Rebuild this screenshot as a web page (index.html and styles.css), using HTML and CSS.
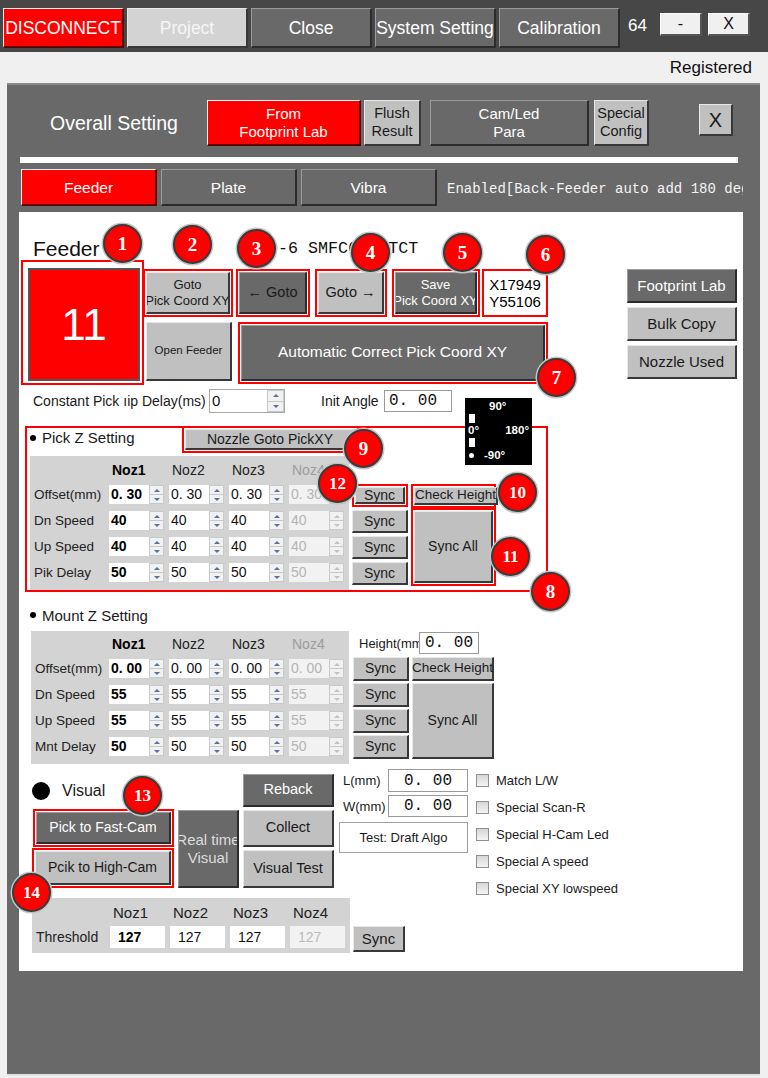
FILE: index.html
```html
<!DOCTYPE html>
<html>
<head>
<meta charset="utf-8">
<title>Overall Setting</title>
<link rel="stylesheet" href="styles.css">
</head>
<body>
<div class="topbar">
  <div class="tb btn rd">DISCONNECT</div>
  <div class="tb btn pj">Project</div>
  <div class="tb btn dk">Close</div>
  <div class="tb btn dk">System Setting</div>
  <div class="tb btn dk">Calibration</div>
  <span class="num">64</span>
  <div class="wbtn btn">-</div>
  <div class="wbtn btn">X</div>
</div>
<div class="reg">Registered</div>

<div class="panel">
  <div class="head">
    <span class="otitle">Overall Setting</span>
    <div class="btn rd h-from">From<br>Footprint Lab</div>
    <div class="btn lt h-flush">Flush<br>Result</div>
    <div class="btn dk h-cam">Cam/Led<br>Para</div>
    <div class="btn lt h-spec">Special<br>Config</div>
    <div class="btn lt h-x">X</div>
  </div>
  <div class="sep"></div>
  <div class="tabs">
    <div class="btn rd tab">Feeder</div>
    <div class="btn dk tab">Plate</div>
    <div class="btn dk tab">Vibra</div>
    <div class="enabled">Enabled[Back-Feeder auto add 180 degree]</div>
  </div>

  <div class="content">
    <div class="ftitle"><span class="fname">Feeder</span><span class="fid">10-6 SMFC0603TCT</span></div>

    <div class="fblock">
      <div class="bigwrap"><div class="big">11</div></div>
      <div class="mid">
        <div class="row1">
          <div class="hl w90"><div class="btn lt f13">Goto<br>Pick Coord XY</div></div>
          <div class="hl w74 ml3"><div class="btn dk dtxt f145">← Goto</div></div>
          <div class="hl w72 ml5"><div class="btn lt f145">Goto →</div></div>
          <div class="hl w88 ml5"><div class="btn dk f13">Save<br>Pick Coord XY</div></div>
          <div class="hl w66 ml2"><div class="xy">X17949<br>Y55106</div></div>
        </div>
        <div class="row2">
          <div class="btn lt openf">Open Feeder</div>
          <div class="hl autoc"><div class="btn dk">Automatic Correct Pick Coord XY</div></div>
        </div>
      </div>
      <div class="rcol">
        <div class="btn dk">Footprint Lab</div>
        <div class="btn lt">Bulk Copy</div>
        <div class="btn lt">Nozzle Used</div>
      </div>
    </div>

    <div class="crow">
      <span class="clabel">Constant Pick ıip Delay(ms)</span>
      <div class="sp cspin"><span class="v">0</span><span class="arr"><i></i><i></i></span></div>
      <span class="ilabel">Init Angle</span>
      <div class="tbox ainp">0. 00</div>
    </div>

    <div class="group">
      <div class="ghead">
        <span class="glabel"><b class="dot"></b>Pick Z Setting</span>
        <div class="hl ngoto"><div class="btn lt">Nozzle Goto PickXY</div></div>
      </div>
      <div class="gbody">
        <div class="tbl pick">
          <span></span><span class="hd b">Noz1</span><span class="hd">Noz2</span><span class="hd">Noz3</span><span class="hd dis">Noz4</span>
          <span class="lb">Offset(mm)</span>
          <div class="sp b"><span class="v">0. 30</span><span class="arr"><i></i><i></i></span></div>
          <div class="sp"><span class="v">0. 30</span><span class="arr"><i></i><i></i></span></div>
          <div class="sp"><span class="v">0. 30</span><span class="arr"><i></i><i></i></span></div>
          <div class="sp off"><span class="v">0. 30</span><span class="arr"><i></i><i></i></span></div>
          <span class="lb">Dn Speed</span>
          <div class="sp b"><span class="v">40</span><span class="arr"><i></i><i></i></span></div>
          <div class="sp"><span class="v">40</span><span class="arr"><i></i><i></i></span></div>
          <div class="sp"><span class="v">40</span><span class="arr"><i></i><i></i></span></div>
          <div class="sp off"><span class="v">40</span><span class="arr"><i></i><i></i></span></div>
          <span class="lb">Up Speed</span>
          <div class="sp b"><span class="v">40</span><span class="arr"><i></i><i></i></span></div>
          <div class="sp"><span class="v">40</span><span class="arr"><i></i><i></i></span></div>
          <div class="sp"><span class="v">40</span><span class="arr"><i></i><i></i></span></div>
          <div class="sp off"><span class="v">40</span><span class="arr"><i></i><i></i></span></div>
          <span class="lb">Pik Delay</span>
          <div class="sp b"><span class="v">50</span><span class="arr"><i></i><i></i></span></div>
          <div class="sp"><span class="v">50</span><span class="arr"><i></i><i></i></span></div>
          <div class="sp"><span class="v">50</span><span class="arr"><i></i><i></i></span></div>
          <div class="sp off"><span class="v">50</span><span class="arr"><i></i><i></i></span></div>
        </div>
        <div class="synccol">
          <div class="hl"><div class="btn lt">Sync</div></div>
          <div class="btn lt">Sync</div>
          <div class="btn lt">Sync</div>
          <div class="btn lt">Sync</div>
        </div>
        <div class="chkcol">
          <div class="hl ch"><div class="btn lt vis-ov">Check Height</div></div>
          <div class="hl sa"><div class="btn lt">Sync All</div></div>
        </div>
      </div>
    </div>

    <div class="mlabel"><b class="dot"></b>Mount Z Setting</div>
    <div class="mrow">
      <div class="tbl mount">
        <span></span><span class="hd b">Noz1</span><span class="hd">Noz2</span><span class="hd">Noz3</span><span class="hd dis">Noz4</span>
        <span class="lb">Offset(mm)</span>
        <div class="sp b"><span class="v">0. 00</span><span class="arr"><i></i><i></i></span></div>
        <div class="sp"><span class="v">0. 00</span><span class="arr"><i></i><i></i></span></div>
        <div class="sp"><span class="v">0. 00</span><span class="arr"><i></i><i></i></span></div>
        <div class="sp off"><span class="v">0. 00</span><span class="arr"><i></i><i></i></span></div>
        <span class="lb">Dn Speed</span>
        <div class="sp b"><span class="v">55</span><span class="arr"><i></i><i></i></span></div>
        <div class="sp"><span class="v">55</span><span class="arr"><i></i><i></i></span></div>
        <div class="sp"><span class="v">55</span><span class="arr"><i></i><i></i></span></div>
        <div class="sp off"><span class="v">55</span><span class="arr"><i></i><i></i></span></div>
        <span class="lb">Up Speed</span>
        <div class="sp b"><span class="v">55</span><span class="arr"><i></i><i></i></span></div>
        <div class="sp"><span class="v">55</span><span class="arr"><i></i><i></i></span></div>
        <div class="sp"><span class="v">55</span><span class="arr"><i></i><i></i></span></div>
        <div class="sp off"><span class="v">55</span><span class="arr"><i></i><i></i></span></div>
        <span class="lb">Mnt Delay</span>
        <div class="sp b"><span class="v">50</span><span class="arr"><i></i><i></i></span></div>
        <div class="sp"><span class="v">50</span><span class="arr"><i></i><i></i></span></div>
        <div class="sp"><span class="v">50</span><span class="arr"><i></i><i></i></span></div>
        <div class="sp off"><span class="v">50</span><span class="arr"><i></i><i></i></span></div>
      </div>
      <div class="mright">
        <div class="hrow"><span class="hlabel">Height(mm)</span><div class="tbox hin">0. 00</div></div>
        <div class="mbtns">
          <div class="msync">
            <div class="btn lt">Sync</div>
            <div class="btn lt">Sync</div>
            <div class="btn lt">Sync</div>
            <div class="btn lt">Sync</div>
          </div>
          <div class="mchk">
            <div class="btn lt mch vis-ov">Check Height</div>
            <div class="btn lt msa">Sync All</div>
          </div>
        </div>
      </div>
    </div>

    <div class="visual">
      <div class="vA">
        <div class="vhead"><b class="bigdot"></b><span>Visual</span></div>
        <div class="hl fast"><div class="btn dk">Pick to Fast-Cam</div></div>
        <div class="hl high"><div class="btn lt">Pcik to High-Cam</div></div>
      </div>
      <div class="btn dk realt">Real time<br>Visual</div>
      <div class="vC">
        <div class="btn dk rb">Reback</div>
        <div class="btn lt co">Collect</div>
        <div class="btn lt vt">Visual Test</div>
      </div>
      <div class="vD">
        <div class="lrow"><span>L(mm)</span><div class="tbox">0. 00</div></div>
        <div class="lrow wrow"><span>W(mm)</span><div class="tbox">0. 00</div></div>
        <div class="tda">Test: Draft Algo</div>
      </div>
      <div class="vE">
        <div class="cb"><i></i>Match L/W</div>
        <div class="cb"><i></i>Special Scan-R</div>
        <div class="cb"><i></i>Special H-Cam Led</div>
        <div class="cb"><i></i>Special A speed</div>
        <div class="cb"><i></i>Special XY lowspeed</div>
      </div>
    </div>

    <div class="thr">
      <div class="tbl ttbl">
        <span></span><span class="hd">Noz1</span><span class="hd">Noz2</span><span class="hd">Noz3</span><span class="hd">Noz4</span>
        <span class="lb">Threshold</span>
        <div class="tin b">127</div>
        <div class="tin">127</div>
        <div class="tin">127</div>
        <div class="tin off">127</div>
      </div>
      <div class="btn lt tsync">Sync</div>
    </div>
  </div>
</div>

<div class="angle">
  <div class="a90">90°</div>
  <div class="abar"></div>
  <div class="amid"><span>0°</span><span>180°</span></div>
  <div class="abar"></div>
  <div class="abot"><b></b><span>-90°</span></div>
</div>

<div class="badge b1">1</div>
<div class="badge b2">2</div>
<div class="badge b3">3</div>
<div class="badge b4">4</div>
<div class="badge b5">5</div>
<div class="badge b6">6</div>
<div class="badge b7">7</div>
<div class="badge b8">8</div>
<div class="badge b9">9</div>
<div class="badge two b10">10</div>
<div class="badge two b11">11</div>
<div class="badge two b12">12</div>
<div class="badge two b13">13</div>
<div class="badge two b14">14</div>
</body>
</html>
```

FILE: styles.css
```css
* { box-sizing: border-box; margin: 0; padding: 0; }
html, body { width: 768px; height: 1078px; overflow: hidden; }
body {
  background: #f0f0f0;
  font-family: "Liberation Sans", Arial, sans-serif;
  color: #1a1a1a;
  position: relative;
}

/* generic 3D buttons */
.btn {
  display: flex; align-items: center; justify-content: center; text-align: center;
  border-style: solid; border-width: 1px 2px 2px 1px;
  border-color: #e8e8e8 #383838 #383838 #e8e8e8;
  line-height: 1.2; white-space: nowrap; overflow: hidden;
  font-size: 14px;
}
.lt { background: #c0c0c0; color: #1a1a1a; }
.dk { background: #696969; color: #fff; border-color: #9c9c9c #2c2c2c #2c2c2c #9c9c9c; }
.rd { background: #ff0000; color: #fff; border-color: #f4f4f4 #5a0000 #5a0000 #f4f4f4; }
.pj { background: #d3d3d3; color: #f6f6f6; }
.btn.dtxt { color: #1a1a1a; }
.vis-ov { overflow: visible; }

/* top bar */
.topbar { height: 52px; background: #474747; display: flex; align-items: flex-start; padding: 8px 0 0 3px; }
.tb { width: 121px; height: 40px; margin-right: 3px; font-size: 17.5px; padding-top: 2px; }
.num { color: #fff; font-size: 17px; line-height: 20px; margin: 8px 0 0 5px; width: 32px; }
.wbtn { width: 42px; height: 23px; margin: 5px 6px 0 0; background: #f0f0f0; color: #111; font-size: 16px; border-color: #fff #555 #555 #fff; }
.reg { height: 28px; line-height: 28px; padding-top: 2px; text-align: right; padding-right: 16px; font-size: 17px; color: #111; }

/* panel */
.panel { margin: 3px 8px 0 7px; height: 993px; background: #696969; border-bottom: 2px solid #e2e2e2; border-top: 2px solid #8a8a8a; }
.head { display: flex; align-items: flex-start; padding-top: 15px; height: 61px; }
.otitle { width: 200px; padding-left: 43px; font-size: 19.5px; color: #fff; line-height: 46px; }
.h-from { width: 154px; height: 46px; font-size: 15px; }
.h-flush { width: 57px; height: 46px; margin-left: 3px; font-size: 14.5px; }
.h-cam { width: 159px; height: 46px; margin-left: 9px; font-size: 15px; }
.h-spec { width: 55px; height: 46px; margin-left: 5px; font-size: 14.5px; }
.h-x { width: 34px; height: 32px; margin: 4px 0 0 50px; font-size: 20px; }
.sep { margin: 11px 0 0 13px; width: 718px; height: 6px; background: #fff; }
.tabs { display: flex; align-items: center; margin-top: 6px; padding-left: 14px; height: 37px; }
.tab { width: 136px; height: 37px; margin-right: 4px; font-size: 15.5px; padding-top: 2px; }
.enabled { margin-left: 6px; width: 296px; overflow: hidden; white-space: nowrap; color: #f4f4f4; font-family: "Liberation Mono", monospace; font-size: 14px; padding-top: 2px; }

/* white content */
.content { margin: 6px 0 0 12px; width: 724px; height: 759px; background: #fff; }

.ftitle { display: grid; grid-template-columns: 225px auto; padding: 26px 0 0 14px; height: 48px; align-items: center; }
.fname { font-size: 21px; line-height: 22px; color: #111; }
.fid { font-family: "Liberation Mono", monospace; font-size: 16.7px; line-height: 22px; color: #111; }

.fblock { display: flex; align-items: flex-start; height: 125px; }
.bigwrap { margin-left: 2px; width: 123px; height: 125px; border: 2px solid #f00; padding: 6px 2px 2px 5px; }
.big { width: 100%; height: 100%; background: #f00; border: 2px solid #555; color: #fff; font-size: 44px; display: flex; align-items: center; justify-content: center; }
.mid { margin-left: -1px; }
.row1 { display: flex; margin-top: 9px; height: 48px; }
.hl { border: 2px solid #f00; padding: 1px; display: flex; }
.hl > * { flex: 1; }
.w90 { width: 90px; } .w74 { width: 74px; } .w72 { width: 72px; } .w88 { width: 88px; } .w66 { width: 66px; }
.ml2 { margin-left: 2px; } .ml3 { margin-left: 3px; } .ml5 { margin-left: 5px; }
.f13 { font-size: 13px; line-height: 1.2; }
.f145 { font-size: 14.5px; }
.xy { background: #fff; font-size: 15px; display: flex; align-items: center; justify-content: center; line-height: 1.15; color: #000; text-align: left; }
.row2 { display: flex; margin-top: 5px; align-items: flex-start; }
.openf { margin-left: 3px; width: 86px; height: 59px; font-size: 11.5px; }
.autoc { margin-left: 6px; width: 310px; height: 62px; }
.autoc .btn { font-size: 15.5px; }
.rcol { margin: 9px 6px 0 auto; width: 110px; display: flex; flex-direction: column; gap: 4px; }
.rcol .btn { height: 34px; font-size: 15px; }

/* constant row */
.crow { display: flex; align-items: center; margin-top: 4px; height: 24px; }
.clabel { width: 190px; padding-left: 14px; font-size: 14px; white-space: nowrap; }
.ilabel { margin-left: 36px; width: 63px; font-size: 14px; }
.tbox { border: 1px solid #9a9a9a; background: #fff; font-family: "Liberation Mono", monospace; font-size: 16px; padding-left: 4px; display: flex; align-items: center; color: #111; }
.ainp { width: 68px; height: 22px; }

/* spinners */
.sp { display: flex; background: #fff; height: 19px; }
.sp .v { flex: 1; padding-left: 2px; font-size: 14px; line-height: 19px; white-space: nowrap; overflow: hidden; color: #111; }
.sp.b .v { font-weight: bold; color: #000; }
.sp.off { background: #f2f2f2; }
.sp.off .v { color: #b4b4b4; }
.arr { width: 15px; display: flex; flex-direction: column; border: 1px solid #c9c9c9; background: #f1f1f1; }
.arr i { flex: 1; display: flex; align-items: center; justify-content: center; }
.arr i:first-child { border-bottom: 1px solid #c9c9c9; }
.arr i::after { content: ""; width: 0; height: 0; border-left: 3px solid transparent; border-right: 3px solid transparent; }
.arr i:first-child::after { border-bottom: 3px solid #5b6f98; }
.arr i:last-child::after { border-top: 3px solid #5b6f98; }
.sp.off .arr i:first-child::after { border-bottom-color: #c2c2c2; }
.sp.off .arr i:last-child::after { border-top-color: #c2c2c2; }
.cspin { width: 76px; height: 24px; border: 1px solid #a8a8a8; }
.cspin .v { line-height: 22px; font-size: 15px; }
.cspin .arr { width: 17px; }

/* pick z group */
.group { margin: 13px 0 0 6px; width: 523px; height: 166px; border: 2px solid #f00; }
.ghead { display: flex; height: 26px; }
.glabel { width: 155px; padding: 1px 0 0 3px; font-size: 15px; line-height: 18px; display: flex; align-items: center; align-self: flex-start; }
.dot { width: 6px; height: 6px; border-radius: 50%; background: #000; margin-right: 6px; display: inline-block; }
.ngoto { margin-top: -2px; width: 177px; height: 27px; }
.gbody { display: flex; align-items: flex-start; margin-top: 2px; }

.tbl { background: #d3d3d3; display: grid; column-gap: 5px; font-size: 13.5px; }
.tbl .hd { display: flex; align-items: flex-end; padding-left: 3px; font-size: 14px; line-height: 16px; color: #222; }
.tbl .hd.b { font-weight: bold; color: #000; }
.tbl .hd.dis { color: #9c9c9c; }
.tbl .lb { display: flex; align-items: center; padding-left: 4px; white-space: nowrap; color: #222; }
.pick { margin-left: 3px; width: 319px; height: 134px; grid-template-columns: 74px repeat(4, 55px); grid-template-rows: 22px repeat(4, 19px); row-gap: 7px; }

.synccol { margin: 28px 0 0 3px; width: 56px; display: flex; flex-direction: column; gap: 3px; }
.synccol > * { height: 23px; }
.synccol .btn { font-size: 14px; }
.chkcol { margin: 28px 0 0 3px; width: 85px; display: flex; flex-direction: column; }
.ch { height: 24px; }
.ch .btn { font-size: 13.5px; }
.sa { height: 78px; }

/* mount */
.mlabel { margin: 7px 0 0 11px; height: 32px; display: flex; align-items: center; font-size: 15px; }
.mrow { display: flex; align-items: flex-start; height: 133px; }
.mount { margin-left: 12px; width: 318px; height: 133px; grid-template-columns: 73px repeat(4, 55px); grid-template-rows: 21px repeat(4, 19px); row-gap: 7px; }
.mright { margin-left: 4px; }
.hrow { display: flex; margin-top: 1px; height: 22px; align-items: center; }
.hlabel { width: 66px; padding-left: 6px; overflow: hidden; white-space: nowrap; font-size: 13px; }
.hin { width: 60px; height: 22px; justify-content: center; padding-left: 0; }
.mbtns { display: flex; margin-top: 3px; }
.msync { width: 56px; display: flex; flex-direction: column; gap: 2px; }
.msync .btn { height: 24px; }
.mchk { margin-left: 3px; width: 82px; display: flex; flex-direction: column; gap: 2px; }
.mch { height: 24px; font-size: 13.5px; }
.msa { height: 76px; }

/* visual */
.visual { display: flex; align-items: flex-start; height: 119px; margin-top: 5px; }
.vA { margin-left: 13px; width: 142px; }
.vhead { margin-top: 13px; height: 18px; display: flex; align-items: center; }
.bigdot { width: 18px; height: 18px; border-radius: 50%; background: #000; display: block; }
.vhead span { margin-left: 12px; font-size: 16px; }
.fast { margin: 9px 0 0 1px; width: 141px; height: 38px; }
.high { margin-top: 1px; width: 142px; height: 40px; }
.realt { margin: 41px 0 0 4px; width: 61px; height: 78px; color: #dcdcdc; font-size: 15px; }
.vC { margin: 5px 0 0 4px; width: 91px; display: flex; flex-direction: column; gap: 3px; }
.vC .btn { font-size: 14.5px; }
.rb { height: 33px; } .co { height: 37px; } .vt { height: 38px; }
.vD { margin-left: 5px; width: 129px; }
.lrow { display: flex; align-items: center; height: 23px; }
.lrow span { width: 49px; padding-left: 4px; font-size: 13px; white-space: nowrap; }
.lrow .tbox { width: 80px; height: 100%; justify-content: center; padding-left: 0; }
.wrow { margin-top: 3px; height: 22px; }
.tda { margin-top: 5px; height: 31px; border: 1px solid #a0a0a0; background: #fff; font-size: 13px; display: flex; align-items: center; justify-content: center; }
.vE { margin: -2px 0 0 8px; }
.cb { height: 27px; display: flex; align-items: center; font-size: 13px; white-space: nowrap; color: #1a1a1a; }
.cb i { width: 13px; height: 13px; border: 1px solid #8f8f8f; background: linear-gradient(#d6d6d6, #f4f4f4); margin-right: 7px; display: block; }

/* threshold */
.thr { display: flex; align-items: flex-start; margin-top: 10px; }
.ttbl { margin-left: 13px; width: 318px; height: 55px; grid-template-columns: 73px repeat(4, 55px); grid-template-rows: 23px 22px; row-gap: 5px; font-size: 14px; }
.ttbl .hd { font-size: 15px; }
.tin { background: #fff; font-size: 14px; display: flex; align-items: center; padding-left: 8px; color: #111; }
.tin.b { font-weight: bold; color: #000; }
.tin.off { background: #f2f2f2; color: #bcbcbc; }
.tsync { margin: 28px 0 0 3px; width: 52px; height: 26px; font-size: 15px; }

/* angle indicator overlay */
.angle { position: absolute; left: 465px; top: 398px; width: 67px; height: 67px; background: #000; color: #fff; font-size: 11.5px; font-weight: bold; padding: 2px 3px 0 3px; line-height: 13px; }
.a90 { padding-left: 21px; height: 13px; }
.abar { width: 6px; height: 9px; background: #fff; margin: 1px 0 1px 1px; }
.amid { display: flex; justify-content: space-between; height: 13px; }
.abot { display: flex; align-items: center; height: 14px; }
.abot b { width: 5px; height: 5px; border-radius: 50%; background: #fff; display: block; margin: 0 10px 0 1px; }

/* numbered badges */
.badge {
  position: absolute; width: 39px; height: 39px; border-radius: 50%;
  background: #ff0000; border: 2px solid #3a3a3a; box-shadow: 0 0 0 1.5px #c4c4c4;
  color: #fff; font-family: "Liberation Serif", serif; font-weight: bold; font-size: 19px;
  display: flex; align-items: center; justify-content: center;
}
.badge.two { font-size: 17px; }
.b1 { left: 103px; top: 224px; }
.b2 { left: 173px; top: 225px; }
.b3 { left: 237px; top: 229px; }
.b4 { left: 351px; top: 233px; }
.b5 { left: 443px; top: 233px; }
.b6 { left: 526px; top: 235px; }
.b7 { left: 537px; top: 358px; }
.b8 { left: 531px; top: 572px; }
.b9 { left: 344px; top: 429px; }
.b10 { left: 498px; top: 473px; }
.b11 { left: 491px; top: 537px; }
.b12 { left: 318px; top: 464px; }
.b13 { left: 123px; top: 776px; }
.b14 { left: 12px; top: 873px; }
```
